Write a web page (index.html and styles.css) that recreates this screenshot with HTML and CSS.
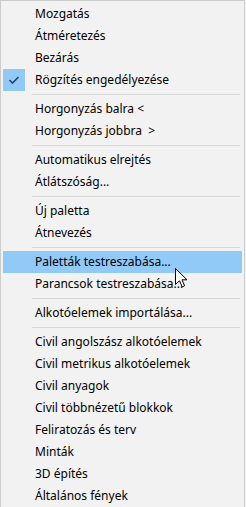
FILE: index.html
```html
<!DOCTYPE html>
<html>
<head>
<meta charset="utf-8">
<link rel="stylesheet" href="styles.css">
</head>
<body>
<div class="menu">
  <div class="item">Mozgatás</div>
  <div class="item">Átméretezés</div>
  <div class="item">Bezárás</div>
  <div class="item checked"><span class="check"><svg width="22" height="22" viewBox="0 0 22 22"><path d="M6.5 11 L9.5 14 L15.5 8" fill="none" stroke="#26466b" stroke-width="1.6"/></svg></span>Rögzítés engedélyezése</div>
  <div class="sep"></div>
  <div class="item">Horgonyzás balra &lt;</div>
  <div class="item">Horgonyzás jobbra  &gt;</div>
  <div class="sep"></div>
  <div class="item">Automatikus elrejtés</div>
  <div class="item">Átlátszóság...</div>
  <div class="sep"></div>
  <div class="item">Új paletta</div>
  <div class="item">Átnevezés</div>
  <div class="sep"></div>
  <div class="item hot">Paletták testreszabása...</div>
  <div class="item">Parancsok testreszabása...</div>
  <div class="sep"></div>
  <div class="item">Alkotóelemek importálása...</div>
  <div class="sep"></div>
  <div class="item">Civil angolszász alkotóelemek</div>
  <div class="item">Civil metrikus alkotóelemek</div>
  <div class="item">Civil anyagok</div>
  <div class="item">Civil többnézetű blokkok</div>
  <div class="item">Feliratozás és terv</div>
  <div class="item">Minták</div>
  <div class="item">3D építés</div>
  <div class="item">Általános fények</div>
</div>
<svg class="cursor" width="13" height="20" viewBox="0 0 13 20"><path d="M0.5 0.5 L0.5 16.5 L4.5 12.8 L7.2 18.8 L9.6 17.8 L7 11.8 L12 11.8 Z" fill="#fff" stroke="#000" stroke-width="1" stroke-linejoin="miter"/></svg>
</body>
</html>
```
FILE: styles.css
```css
html, body {
  margin: 0;
  padding: 0;
  background: #f2f2f2;
}
body {
  width: 246px;
  height: 507px;
  overflow: hidden;
  position: relative;
}
.menu {
  box-sizing: border-box;
  width: 245px;
  height: 520px;
  background: #f2f2f2;
  border: 1px solid #cccccc;
  padding: 2px;
  font-family: "Noto Sans", "Open Sans", sans-serif;
  font-size: 12px;
  color: #000;
}
.item {
  height: 22px;
  line-height: 22px;
  padding-left: 32px;
  white-space: pre;
  position: relative;
}
.item.hot {
  background: #91c9f7;
}
.check {
  position: absolute;
  left: 0;
  top: 0;
  width: 22px;
  height: 22px;
  background: #91c9f7;
  display: flex;
}
.sep {
  height: 7px;
  display: flex;
  align-items: center;
  padding-left: 29px;
  padding-right: 2px;
}
.sep::before {
  content: "";
  flex: 1;
  height: 1px;
  background: #d7d7d7;
}
.cursor {
  position: absolute;
  left: 175px;
  top: 268px;
}
```
